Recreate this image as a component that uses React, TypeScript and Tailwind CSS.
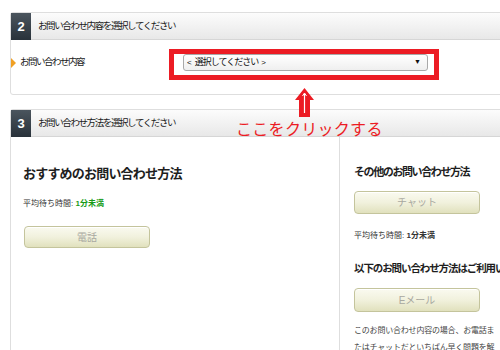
import React from 'react';

const jp = { fontFamily: '"Liberation Sans", "Noto Sans CJK JP", sans-serif' };

const SectionHeader: React.FC<{ num: string; title: string }> = ({ num, title }) => (
  <div className="flex h-[27px]">
    <div className="w-[20px] flex items-center justify-center bg-gradient-to-b from-[#4b555e] to-[#29323a] text-white font-bold text-[13px]">
      {num}
    </div>
    <div className="flex-1 flex items-center pl-[7px] bg-gradient-to-b from-[#fcfcfc] to-[#e8e8e8] border-b border-[#d6d6d6] text-[9.5px] tracking-[-1.4px] text-[#1a1a1a]">
      {title}
    </div>
  </div>
);

const CreamButton: React.FC<{ label: string; className?: string }> = ({ label, className }) => (
  <div
    className={`w-[126px] flex items-center justify-center rounded-[4px] border border-[#c4c49c] bg-gradient-to-b from-[#fafaf0] via-[#f1f1dd] to-[#e1e1bd] shadow-[inset_0_1px_0_#fff] text-[10px] text-[#a8a8a0] ${className ?? ''}`}
  >
    {label}
  </div>
);

export default function App() {
  return (
    <div style={jp} className="relative w-[500px] h-[350px] overflow-hidden bg-white pt-[12px] pl-[10px]">
      {/* Section 2 */}
      <div className="w-[520px] border border-[#dedede] rounded-[3px]">
        <SectionHeader num="2" title="お問い合わせ内容を選択してください" />
        <div className="h-[54px] pt-[14px]">
          <div className="flex items-center h-[17px]">
            <div className="w-0 h-0 border-l-[5px] border-l-[#f0a024] border-y-[5px] border-y-transparent" />
            <div className="w-[167px] pl-[4px] text-[9.5px] tracking-[-1.5px] text-[#1a1a1a]">お問い合わせ内容</div>
            <div className="w-[245px] h-[17px] flex items-center justify-between px-[3px] rounded-[3px] border border-[#a9a9a9] bg-gradient-to-b from-white to-[#efefef] text-[9px] text-[#111]">
              <span className="flex items-center">
                <span className="text-[8px] mr-[3px]">&lt;</span>
                <span className="tracking-[-1px]">選択してください</span>
                <span className="text-[8px] ml-[3px]">&gt;</span>
              </span>
              <span className="text-[7px] pr-[3px]">▼</span>
            </div>
          </div>
        </div>
      </div>

      {/* Section 3 */}
      <div className="mt-[14px] w-[520px] border border-[#dedede] rounded-[3px]">
        <SectionHeader num="3" title="お問い合わせ方法を選択してください" />
        <div className="flex h-[240px]">
          <div className="w-[329px] shrink-0 border-r border-[#dedede] pl-[12px] pt-[29px]">
            <div className="text-[13px] leading-[16px] font-bold tracking-[-0.8px] text-[#1e1e1e]">
              おすすめのお問い合わせ方法
            </div>
            <div className="mt-[16px] text-[8px] leading-[12px] text-[#333]">
              平均待ち時間: <span className="font-bold text-[#169b16]">1分未満</span>
            </div>
            <CreamButton label="電話" className="mt-[16px] ml-[1px] h-[22px]" />
          </div>
          <div className="flex-1 min-w-0 pl-[14px] pt-[28px] whitespace-nowrap">
            <div className="text-[11px] leading-[14px] font-bold tracking-[-1.4px] text-[#1e1e1e]">
              その他のお問い合わせ方法
            </div>
            <CreamButton label="チャット" className="mt-[12px] h-[23px]" />
            <div className="mt-[16px] text-[8px] leading-[12px] text-[#333]">
              平均待ち時間: <span className="font-bold">1分未満</span>
            </div>
            <div className="mt-[18px] text-[10.5px] leading-[16px] font-bold tracking-[-1.1px] text-[#1e1e1e]">
              以下のお問い合わせ方法はご利用いただけません
            </div>
            <CreamButton label="Eメール" className="mt-[12px] h-[24px]" />
            <div className="mt-[10px] text-[8px] leading-[17px] tracking-[-0.2px] text-[#444]">
              このお問い合わせ内容の場合、お電話ま
              <br />
              たはチャットだといちばん早く問題を解
            </div>
          </div>
        </div>
      </div>

      {/* Annotation: red frame around the select */}
      <div className="absolute left-[169px] top-[49px] w-[270px] h-[31px] border-[5px] border-[#ec1c24]" />

      {/* Annotation: arrow */}
      <svg className="absolute left-[295px] top-[88px]" width="19" height="29" viewBox="0 0 19 29">
        <polygon points="9.5,0 19,12 15,12 15,29 4,29 4,12 0,12" fill="#ec1c24" />
        <polyline points="7.5,8 9.5,5 11.5,8" fill="none" stroke="#fff" strokeWidth="1" />
        <line x1="9.5" y1="5.5" x2="9.5" y2="25" stroke="#fff" strokeWidth="1.2" />
      </svg>

      {/* Annotation: caption */}
      <div className="absolute left-[236px] top-[120px] text-[16px] leading-[20px] tracking-[0.3px] text-[#ec1c24]">
        ここをクリックする
      </div>
    </div>
  );
}
